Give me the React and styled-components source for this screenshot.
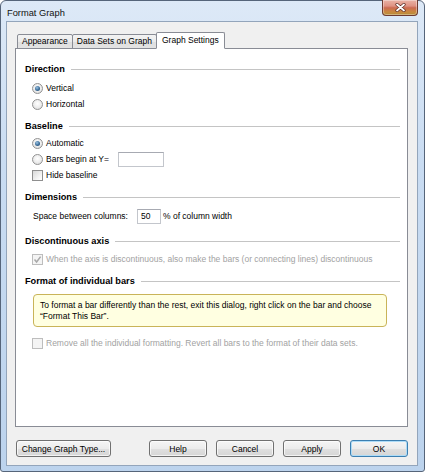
import React from "react";
import styled, { createGlobalStyle } from "styled-components";

const GlobalStyle = createGlobalStyle`
  html, body {
    margin: 0;
    padding: 0;
    background: #ffffff;
  }
  body {
    font-family: "Liberation Sans", Arial, sans-serif;
  }
`;

const Window = styled.div`
  box-sizing: border-box;
  width: 425px;
  height: 472px;
  display: flex;
  flex-direction: column;
  border: 1px solid #56657a;
  border-radius: 6px 6px 3px 3px;
  background: linear-gradient(180deg, #dde9f7 0%, #c9dcf2 35%, #bcd3ed 100%);
  padding: 0 6px 5px 5px;
`;

const TitleBar = styled.div`
  height: 20px;
  display: flex;
  align-items: flex-start;
  justify-content: space-between;
`;

const Title = styled.div`
  font-size: 9.3px;
  color: #111;
  padding: 7px 0 0 1px;
  line-height: 11px;
`;

const CloseButton = styled.div`
  box-sizing: border-box;
  width: 36px;
  height: 16px;
  margin-top: -1px;
  display: flex;
  align-items: center;
  justify-content: center;
  border: 1px solid #6e3b30;
  border-top: none;
  border-radius: 0 0 4px 4px;
  background: linear-gradient(
    180deg,
    #eab3a6 0%,
    #df9383 40%,
    #cc6a52 52%,
    #c98a3e 80%,
    #b38a36 100%
  );
  box-shadow: inset 0 0 0 1px rgba(255, 255, 255, 0.35);
`;

const Client = styled.div`
  flex: 1;
  display: flex;
  flex-direction: column;
  background: #f0f0f0;
  border: 1px solid #93a5bb;
  padding: 10px 9px 8px 8px;
`;

const TabStrip = styled.div`
  display: flex;
  align-items: flex-end;
  padding-left: 2px;
  margin-bottom: -1px;
  position: relative;
  z-index: 1;
`;

const Tab = styled.div`
  box-sizing: border-box;
  height: ${(p) => (p.$active ? "17px" : "15px")};
  padding: ${(p) => (p.$active ? "2px 5px 0" : "1px 4px 0")};
  margin-left: ${(p) => (p.$first ? "0" : "-1px")};
  font-size: 8.5px;
  line-height: 11px;
  color: #000;
  white-space: nowrap;
  border: 1px solid #898c95;
  border-bottom-color: ${(p) => (p.$active ? "#ffffff" : "#898c95")};
  border-radius: 2px 2px 0 0;
  background: ${(p) =>
    p.$active
      ? "#ffffff"
      : "linear-gradient(180deg, #f3f3f3 0%, #ebebeb 50%, #dedede 51%, #e3e3e3 100%)"};
`;

const Panel = styled.div`
  flex: 1;
  display: flex;
  flex-direction: column;
  background: #ffffff;
  border: 1px solid #898c95;
  padding: 14px 7px 0 9px;
`;

const Section = styled.div`
  margin-top: ${(p) => p.$mt || 0}px;
`;

const HeadingRow = styled.div`
  height: 12px;
  display: flex;
  align-items: center;
  gap: 6px;
`;

const HeadingText = styled.div`
  font-size: 9.2px;
  font-weight: bold;
  color: #000;
  white-space: nowrap;
`;

const Rule = styled.div`
  flex: 1;
  height: 1px;
  background: #c4c4c4;
`;

const Options = styled.div`
  display: flex;
  flex-direction: column;
  margin-top: ${(p) => (p.$mt == null ? 4 : p.$mt)}px;
  padding-left: ${(p) => (p.$indent == null ? 7 : p.$indent)}px;
`;

const Row = styled.div`
  height: ${(p) => p.$h || 16}px;
  display: flex;
  align-items: center;
  font-size: 8.5px;
  color: ${(p) => (p.$disabled ? "#a2a2a2" : "#000")};
  white-space: nowrap;
`;

const Radio = styled.span`
  box-sizing: border-box;
  width: 11px;
  height: 11px;
  margin-right: 3px;
  border-radius: 50%;
  border: 1px solid #929292;
  background: radial-gradient(circle at 50% 40%, #ffffff 0%, #ececec 55%, #d2d2d2 100%);
  display: flex;
  align-items: center;
  justify-content: center;

  &::after {
    content: "";
    display: ${(p) => (p.$checked ? "block" : "none")};
    width: 5px;
    height: 5px;
    border-radius: 50%;
    background: radial-gradient(circle at 40% 35%, #9cc3e2 0%, #3a6c98 55%, #1f4266 100%);
  }
`;

const Box = styled.span`
  box-sizing: border-box;
  width: 11px;
  height: 11px;
  margin-right: 3px;
  border: 1px solid ${(p) => (p.$disabled ? "#bdbdbd" : "#8f8f8f")};
  background: ${(p) =>
    p.$disabled ? "#f4f4f4" : "linear-gradient(135deg, #d8d8d8 0%, #f6f6f6 70%, #ffffff 100%)"};
  display: flex;
  align-items: center;
  justify-content: center;
`;

const TextInput = styled.input`
  box-sizing: border-box;
  width: ${(p) => p.$w}px;
  height: 15px;
  margin: 0 ${(p) => p.$mr || 0}px 0 9px;
  padding: 0 3px;
  border: 1px solid #c3c6cc;
  border-top-color: #a7aab2;
  background: #fff;
  font-family: "Liberation Sans", Arial, sans-serif;
  font-size: 8.5px;
  color: #000;
  outline: none;
`;

const Note = styled.div`
  margin: 7px 13px 0 8px;
  padding: 5px 6px;
  border: 1px solid #c9b459;
  border-radius: 4px;
  background: #ffffe1;
  font-size: 8.5px;
  line-height: 10.5px;
  color: #000;
`;

const ButtonBar = styled.div`
  margin-top: 13px;
  display: flex;
  align-items: center;
  justify-content: space-between;
  padding-left: 1px;
`;

const ButtonGroup = styled.div`
  display: flex;
  gap: 9px;
`;

const Button = styled.div`
  box-sizing: border-box;
  width: ${(p) => p.$w || 58}px;
  height: 17px;
  display: flex;
  align-items: center;
  justify-content: center;
  font-size: 8.5px;
  color: #000;
  white-space: nowrap;
  border: 1px solid ${(p) => (p.$default ? "#3c7fb1" : "#707070")};
  border-radius: 3px;
  background: linear-gradient(180deg, #f5f5f5 0%, #ececec 50%, #e0e0e0 51%, #d6d6d6 100%);
  box-shadow: inset 0 0 0 1px ${(p) => (p.$default ? "#aedcf7" : "rgba(255,255,255,0.7)")};
`;

function CloseGlyph() {
  return (
    <svg width="11" height="9" viewBox="0 0 11 9">
      <path
        d="M2 1.5 L9 7.5 M9 1.5 L2 7.5"
        stroke="#5a2a22"
        strokeWidth="3.2"
        strokeLinecap="round"
      />
      <path
        d="M2 1.5 L9 7.5 M9 1.5 L2 7.5"
        stroke="#ffffff"
        strokeWidth="1.8"
        strokeLinecap="round"
      />
    </svg>
  );
}

function Check({ color }) {
  return (
    <svg width="9" height="9" viewBox="0 0 9 9">
      <path
        d="M1.5 4.5 L3.6 7 L7.6 1.6"
        fill="none"
        stroke={color}
        strokeWidth="1.5"
      />
    </svg>
  );
}

function Heading({ children }) {
  return (
    <HeadingRow>
      <HeadingText>{children}</HeadingText>
      <Rule />
    </HeadingRow>
  );
}

function App() {
  return (
    <>
      <GlobalStyle />
      <Window>
        <TitleBar>
          <Title>Format Graph</Title>
          <CloseButton>
            <CloseGlyph />
          </CloseButton>
        </TitleBar>

        <Client>
          <TabStrip>
            <Tab $first>Appearance</Tab>
            <Tab>Data Sets on Graph</Tab>
            <Tab $active>Graph Settings</Tab>
          </TabStrip>

          <Panel>
            <Section>
              <Heading>Direction</Heading>
              <Options $mt={5}>
                <Row>
                  <Radio $checked />
                  Vertical
                </Row>
                <Row>
                  <Radio />
                  Horizontal
                </Row>
              </Options>
            </Section>

            <Section $mt={8}>
              <Heading>Baseline</Heading>
              <Options $mt={3}>
                <Row>
                  <Radio $checked />
                  Automatic
                </Row>
                <Row>
                  <Radio />
                  Bars begin at Y=
                  <TextInput $w={46} readOnly value="" />
                </Row>
                <Row>
                  <Box />
                  Hide baseline
                </Row>
              </Options>
            </Section>

            <Section $mt={8}>
              <Heading>Dimensions</Heading>
              <Options $indent={8}>
                <Row $h={18}>
                  Space between columns:
                  <TextInput $w={24} $mr={2} readOnly value="50" />
                  % of column width
                </Row>
              </Options>
            </Section>

            <Section $mt={10}>
              <Heading>Discontinuous axis</Heading>
              <Options>
                <Row $disabled>
                  <Box $disabled>
                    <Check color="#a8a8a8" />
                  </Box>
                  When the axis is discontinuous, also make the bars (or connecting lines) discontinuous
                </Row>
              </Options>
            </Section>

            <Section $mt={8}>
              <Heading>Format of individual bars</Heading>
              <Note>
                To format a bar differently than the rest, exit this dialog, right click on the bar and choose
                <br />
                &ldquo;Format This Bar&rdquo;.
              </Note>
              <Options $mt={8}>
                <Row $disabled>
                  <Box $disabled />
                  Remove all the individual formatting. Revert all bars to the format of their data sets.
                </Row>
              </Options>
            </Section>
          </Panel>

          <ButtonBar>
            <Button $w={95}>Change Graph Type...</Button>
            <ButtonGroup>
              <Button>Help</Button>
              <Button>Cancel</Button>
              <Button>Apply</Button>
              <Button $default>OK</Button>
            </ButtonGroup>
          </ButtonBar>
        </Client>
      </Window>
    </>
  );
}

export default App;
